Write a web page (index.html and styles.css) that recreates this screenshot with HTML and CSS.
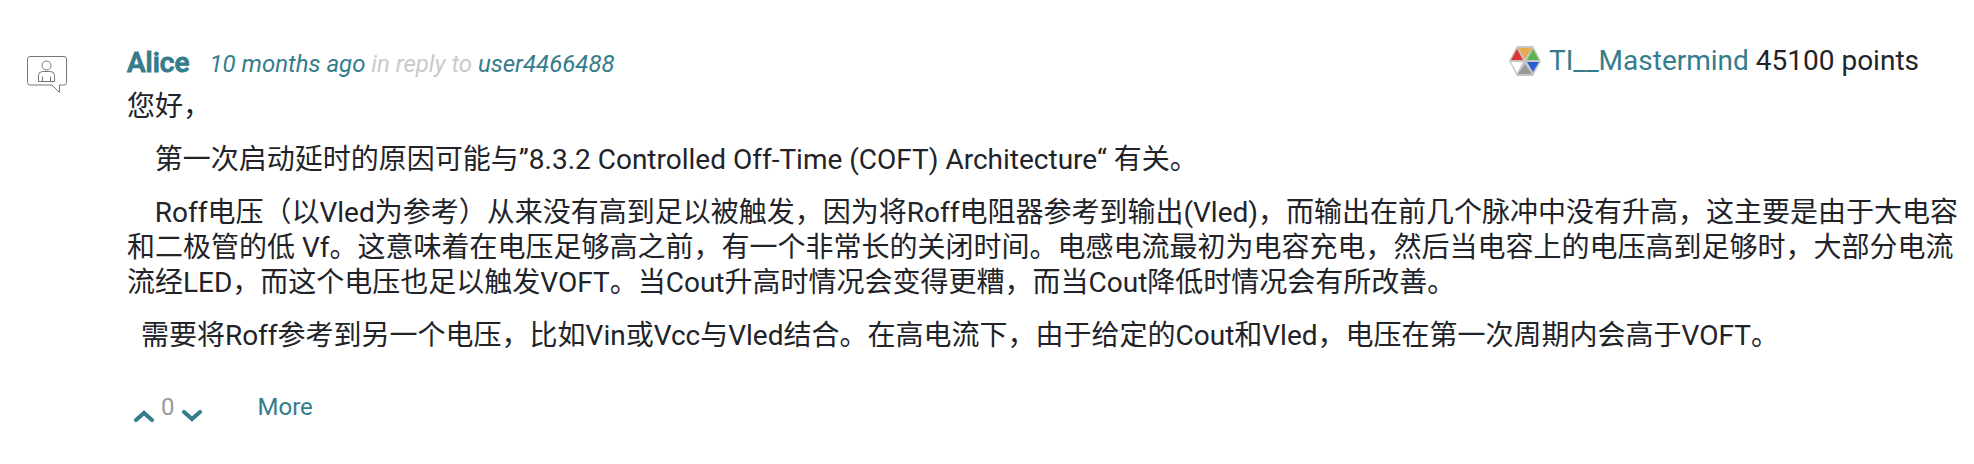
FILE: index.html
```html
<!DOCTYPE html>
<html lang="zh-CN">
<head>
    <meta charset="UTF-8">
    <meta name="viewport" content="width=device-width, initial-scale=1.0">
    <title>Forum Reply</title>
    <link rel="stylesheet" href="styles.css">
</head>
<body>
    <article class="reply">
        <svg class="reply-icon" viewBox="0 0 40 38" aria-hidden="true">
            <path d="M3 .5H37Q39.500 .5 39.500 3V26.500Q39.500 29 37 29H32.500V36.500L25 29H3Q.5 29 .5 26.500V3Q.5 .5 3 .5Z"/>
            <circle cx="19.500" cy="9.500" r="4.500"/>
            <path d="M11.500 25.500V19.500Q11.500 15.500 15.500 15.500H23.500Q27.500 15.500 27.500 19.500V25.500ZM15.500 20.500V25.500M23.500 20.500V25.500"/>
        </svg>
        <div class="reply-main">
            <header class="reply-header">
                <div class="author">
                    <a class="author-name" href="#">Alice</a>
                    <span class="meta"><a href="#">10 months ago</a> in reply to <a href="#">user4466488</a></span>
                </div>
                <div class="rank">
                    <svg class="rank-icon" viewBox="0 0 32 30" aria-hidden="true">
                        <path fill="#c6c6c6" d="M8 0H24L32 15L24 30H8L0 15Z"/>
                        <path fill="#e8aa50" d="M9 2H23L16 13Z"/>
                        <path fill="#df3434" d="M8 3L14 14H2Z"/>
                        <path fill="#5bb450" d="M24 3L30 14H18Z"/>
                        <path fill="#fff" d="M2 16H14L8 27Z"/>
                        <path fill="#285fd8" d="M18 16H30L24 26Z"/>
                        <path fill="#999" d="M16 18L23 28H9Z"/>
                    </svg>
                    <span><a href="#">TI__Mastermind</a> 45100 points</span>
                </div>
            </header>
            <div class="reply-content">
                <p>您好，</p>
                <p>&nbsp;&nbsp;&nbsp;&nbsp;第一次启动延时的原因可能与”8.3.2 Controlled Off-Time (COFT) Architecture“ 有关。</p>
                <p>&nbsp;&nbsp;&nbsp;&nbsp;Roff电压（以Vled为参考）从来没有高到足以被触发，因为将Roff电阻器参考到输出(Vled)，而输出在前几个脉冲中没有升高，这主要是由于大电容和二极管的低 Vf。这意味着在电压足够高之前，有一个非常长的关闭时间。电感电流最初为电容充电，然后当电容上的电压高到足够时，大部分电流流经LED，而这个电压也足以触发VOFT。当Cout升高时情况会变得更糟，而当Cout降低时情况会有所改善。</p>
                <p>&nbsp;&nbsp;需要将Roff参考到另一个电压，比如Vin或Vcc与Vled结合。在高电流下，由于给定的Cout和Vled，电压在第一次周期内会高于VOFT。</p>
            </div>
            <footer class="reply-actions">
                <div class="votes">
                    <button class="vote" type="button" aria-label="Vote up">
                        <svg viewBox="0 0 20 12"><path d="M2 10L10 3L18 10"/></svg>
                    </button>
                    <span class="vote-count">0</span>
                    <button class="vote" type="button" aria-label="Vote down">
                        <svg viewBox="0 0 20 12"><path d="M2 2L10 9L18 2"/></svg>
                    </button>
                </div>
                <a class="more" href="#">More</a>
            </footer>
        </div>
    </article>
</body>
</html>
```
FILE: styles.css
```css
* { margin: 0; padding: 0; box-sizing: border-box; }
body { font-family: Roboto, "Noto Sans CJK SC", sans-serif; font-size: 28px; line-height: 35px; color: #222329; background: #fff; }
a { color: #357c8c; text-decoration: none; }
.reply { display: flex; align-items: flex-start; gap: 60px; padding: 43px 12px 32px 27px; }
.reply-icon { flex: none; width: 40px; height: 38px; margin-top: 13px; fill: none; stroke: #777; stroke-width: 1; }
.reply-main { flex: 1; min-width: 0; }
.reply-header { display: flex; justify-content: space-between; align-items: flex-start; padding-right: 43px; margin-bottom: 7px; }
.author { display: flex; align-items: baseline; gap: 20px; padding-top: 2px; }
.author-name { font-weight: 500; -webkit-text-stroke: 1px #357c8c; }
.meta { font-size: 24px; font-style: italic; color: #cacaca; }
.rank { display: flex; align-items: center; gap: 8px; }
.rank-icon { width: 32px; height: 30px; }
.reply-content p { margin-bottom: 18px; }
.reply-actions { display: flex; align-items: center; gap: 56px; margin-top: 37px; padding-left: 7px; font-size: 24px; }
.votes { display: flex; align-items: flex-end; gap: 7px; }
.vote { height: 19px; background: none; border: none; cursor: pointer; }
.vote svg { display: block; width: 20px; height: 12px; fill: none; stroke: #357c8c; stroke-width: 4; stroke-linecap: round; }
.vote-count { color: #999; }
```
